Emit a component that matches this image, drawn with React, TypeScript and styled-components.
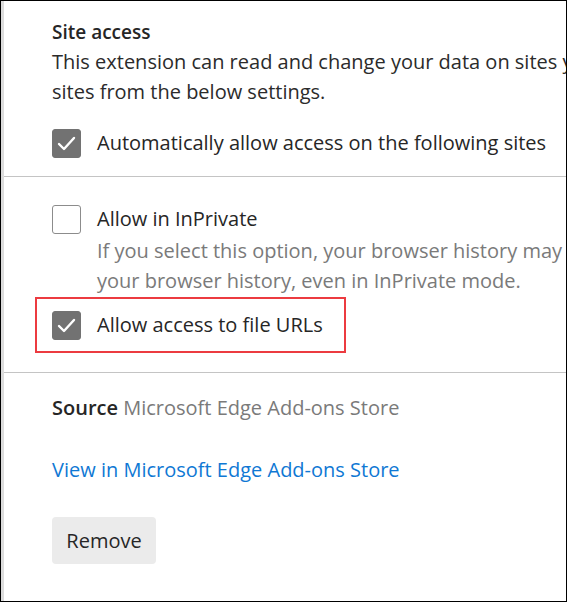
import { createGlobalStyle } from "styled-components";
import styled from "styled-components";

const GlobalStyle = createGlobalStyle`
  html, body {
    margin: 0;
    padding: 0;
    background: #ffffff;
  }
  body {
    font-family: "Open Sans", "Noto Sans", sans-serif;
    color: #262626;
  }
`;

const Frame = styled.div`
  width: 567px;
  height: 602px;
  box-sizing: border-box;
  border: 1px solid #000;
  box-shadow: inset 3px 0 0 #dcdcdc;
  overflow: hidden;
  display: flex;
  flex-direction: column;
`;

const Section = styled.section<{ $pt: number; $pb: number }>`
  padding: ${(p) => p.$pt}px 0 ${(p) => p.$pb}px 51px;
  display: flex;
  flex-direction: column;
`;

const Divider = styled.hr`
  margin: 0 0 0 3px;
  border: none;
  border-top: 1px solid #c4c4c4;
`;

const Title = styled.h2`
  margin: 0;
  font-size: 19px;
  font-weight: 600;
  line-height: 30px;
  color: #262626;
`;

const Line = styled.div<{ $muted?: boolean }>`
  font-size: 20px;
  line-height: 30px;
  white-space: nowrap;
  color: ${(p) => (p.$muted ? "#7a7a7a" : "#2b2b2b")};
`;

const Option = styled.label<{ $mt: number }>`
  display: flex;
  align-items: center;
  gap: 16px;
  margin-top: ${(p) => p.$mt}px;
  font-size: 20px;
  line-height: 30px;
  white-space: nowrap;
  color: #262626;
`;

const Box = styled.span<{ $checked: boolean }>`
  flex: none;
  width: 29px;
  height: 29px;
  box-sizing: border-box;
  border-radius: 3px;
  display: flex;
  align-items: center;
  justify-content: center;
  background: ${(p) => (p.$checked ? "#727272" : "#ffffff")};
  border: 1px solid ${(p) => (p.$checked ? "#727272" : "#8c8c8c")};
`;

const Hint = styled.div`
  margin-top: 2px;
  padding-left: 45px;
  display: flex;
  flex-direction: column;
`;

const Highlight = styled.div`
  margin: 1px 0 0 -17px;
  width: 311px;
  height: 56px;
  box-sizing: border-box;
  border: 2px solid #ec3b40;
  padding-left: 15px;
  display: flex;
  align-items: center;
`;

const SourceRow = styled.div`
  font-size: 20px;
  line-height: 30px;
  color: #7a7a7a;
  white-space: nowrap;
`;

const Strong = styled.span`
  font-weight: 600;
  color: #262626;
`;

const Link = styled.a`
  margin-top: 32px;
  font-size: 20px;
  line-height: 30px;
  color: #0f78d4;
  text-decoration: none;
  white-space: nowrap;
`;

const Button = styled.button`
  margin-top: 32px;
  align-self: flex-start;
  width: 104px;
  height: 47px;
  border: none;
  border-radius: 4px;
  background: #ebebeb;
  color: #262626;
  font-family: inherit;
  font-size: 20px;
`;

const Check = () => (
  <svg width="19" height="15" viewBox="0 0 19 15">
    <path
      d="M2 8 L7 13 L17 2"
      fill="none"
      stroke="#fff"
      strokeWidth="2.4"
      strokeLinecap="round"
      strokeLinejoin="round"
    />
  </svg>
);

const Checkbox = ({ checked }: { checked: boolean }) => (
  <Box $checked={checked}>{checked && <Check />}</Box>
);

export default function App() {
  return (
    <>
      <GlobalStyle />
      <Frame>
        <Section $pt={16} $pb={18}>
          <Title>Site access</Title>
          <Line>This extension can read and change your data on sites you visit.</Line>
          <Line>sites from the below settings.</Line>
          <Option $mt={21}>
            <Checkbox checked />
            Automatically allow access on the following sites
          </Option>
        </Section>
        <Divider />
        <Section $pt={27} $pb={19}>
          <Option $mt={0}>
            <Checkbox checked={false} />
            Allow in InPrivate
          </Option>
          <Hint>
            <Line $muted>If you select this option, your browser history may save data</Line>
            <Line $muted>your browser history, even in InPrivate mode.</Line>
          </Hint>
          <Highlight>
            <Option $mt={0}>
              <Checkbox checked />
              Allow access to file URLs
            </Option>
          </Highlight>
        </Section>
        <Divider />
        <Section $pt={20} $pb={0}>
          <SourceRow>
            <Strong>Source</Strong> Microsoft Edge Add-ons Store
          </SourceRow>
          <Link href="#">View in Microsoft Edge Add-ons Store</Link>
          <Button>Remove</Button>
        </Section>
      </Frame>
    </>
  );
}
